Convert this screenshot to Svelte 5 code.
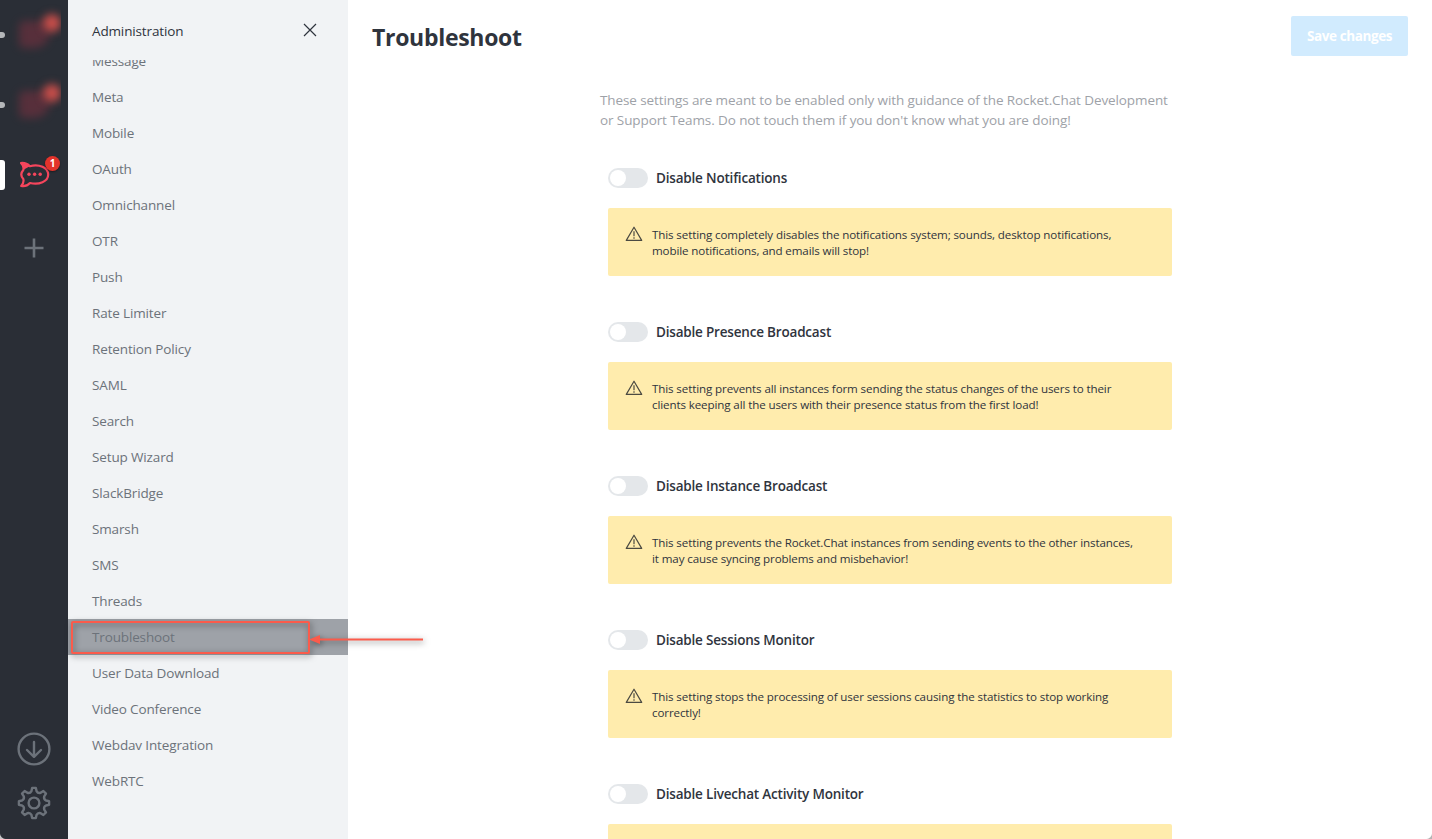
<script>
  const items = ['Message', 'Meta', 'Mobile', 'OAuth', 'Omnichannel', 'OTR', 'Push', 'Rate Limiter', 'Retention Policy', 'SAML', 'Search', 'Setup Wizard', 'SlackBridge', 'Smarsh', 'SMS', 'Threads', 'Troubleshoot', 'User Data Download', 'Video Conference', 'Webdav Integration', 'WebRTC'];
  const settings = [
    { label: 'Disable Notifications', lines: ['This setting completely disables the notifications system; sounds, desktop notifications,', 'mobile notifications, and emails will stop!'] },
    { label: 'Disable Presence Broadcast', lines: ['This setting prevents all instances form sending the status changes of the users to their', 'clients keeping all the users with their presence status from the first load!'] },
    { label: 'Disable Instance Broadcast', lines: ['This setting prevents the Rocket.Chat instances from sending events to the other instances,', 'it may cause syncing problems and misbehavior!'] },
    { label: 'Disable Sessions Monitor', lines: ['This setting stops the processing of user sessions causing the statistics to stop working', 'correctly!'] },
    { label: 'Disable Livechat Activity Monitor', lines: [] }
  ];
  // Cog outline: eight rounded teeth around a 17,17 centre.
  const cog = Array.from({ length: 8 }, (_, i) => {
    const p = (r, d) => {
      const a = ((i * 45 + d - 90) * Math.PI) / 180;
      return `${(17 + r * Math.cos(a)).toFixed(2)} ${(17 + r * Math.sin(a)).toFixed(2)}`;
    };
    return `${i ? 'L' : 'M'}${p(15.2, -7)} L${p(15.2, 7)} L${p(12.2, 12)} Q${p(10.2, 22.5)} ${p(12.2, 33)}`;
  }).join(' ') + ' Z';
</script>

<div class="app">
  <nav class="servers">
    <div class="server muted"><i class="pip"></i><span class="blob"></span><span class="glow"></span></div>
    <div class="server muted"><i class="pip"></i><span class="blob"></span><span class="glow"></span></div>
    <div class="server">
      <i class="pip active"></i>
      <svg class="rocket" width="30" height="28" viewBox="0 0 30 28" fill="none">
        <path d="M1 2C5 1.700 8 3.200 9.800 5.200C19 2.500 28.200 6.500 28.200 13.500C28.200 20.500 19 24.300 10 22C8 24.200 4.800 25.700 1.200 25C3.300 22.700 4 20.500 3.300 18C.8 15.200 .8 11.800 3.300 9C4 6.300 3 4 1 2Z" stroke="#f5455c" stroke-width="2.200" stroke-linejoin="round" />
        <path d="M1 2C5 1.700 8 3.200 9.800 5.200L3.500 8.800C4 6.300 3 4 1 2Z" fill="#f5455c" />
        <g fill="#f5455c"><circle cx="9" cy="13.300" r="1.700" /><circle cx="14.600" cy="13.300" r="1.700" /><circle cx="20.200" cy="13.300" r="1.700" /></g>
      </svg>
      <b class="badge">1</b>
    </div>
    <div class="add"><svg width="20" height="20" viewBox="0 0 20 20"><path d="M10 .5V19.500M.5 10H19.500" stroke="#6c727a" stroke-width="2.600" /></svg></div>
    <div class="tools">
      <svg width="34" height="34" viewBox="0 0 34 34" fill="none" stroke="#6c727a" stroke-width="2.400" stroke-linecap="round" stroke-linejoin="round"><circle cx="17" cy="17" r="15.400" /><path d="M17 10V24.500M10 18L17 24.800L24 18" /></svg>
      <svg width="34" height="34" viewBox="0 0 34 34" fill="none" stroke="#6c727a" stroke-width="2.400" stroke-linejoin="round"><path d={cog} /><circle cx="17" cy="17" r="5.400" /></svg>
    </div>
  </nav>

  <aside>
    <header>
      <span>Administration</span>
      <svg width="14" height="14" viewBox="0 0 14 14"><path d="M1 1L13 13M13 1L1 13" stroke="#2f343d" stroke-width="1.200" /></svg>
    </header>
    <div class="list">
      <ul>
        {#each items as item}
          <li class:selected={item === 'Troubleshoot'}>{item}</li>
        {/each}
      </ul>
    </div>
  </aside>

  <main>
    <div class="top">
      <h1>Troubleshoot</h1>
      <button>Save changes</button>
    </div>
    <div class="content">
      <p class="intro">These settings are meant to be enabled only with guidance of the Rocket.Chat Development<br />or Support Teams. Do not touch them if you don't know what you are doing!</p>
      {#each settings as s}
        <section>
          <div class="field"><span class="toggle"></span><span class="label">{s.label}</span></div>
          <div class="callout">
            <svg width="18" height="16" viewBox="0 0 18 16" fill="none" stroke="#4b4a42"><path d="M9 1.200L16.700 14.400H1.300Z" stroke-width="1.200" stroke-linejoin="round" /><path d="M9 5.300V10.200M9 11.300V12.700" stroke-width="1.200" /></svg>
            <div class="message">{#each s.lines as line}<div>{line}</div>{/each}</div>
          </div>
        </section>
      {/each}
    </div>
  </main>

  <svg class="annotation" width="370" height="60" viewBox="0 0 370 60" fill="none">
    <rect x="11" y="12" width="237" height="31" rx="1" stroke="#fb5b4b" stroke-width="2" />
    <path d="M257 29.500H362" stroke="#fb5b4b" stroke-width="2" />
    <path d="M248 29.500L259 25V34Z" fill="#fb5b4b" />
  </svg>
  <i class="corner left"></i>
  <i class="corner right"></i>
</div>

<style>
  :global(body) { margin: 0; overflow: hidden; background: #fff; }
  .app { position: relative; display: flex; width: 1432px; height: 839px; overflow: hidden; font-family: 'Open Sans', 'Noto Sans', sans-serif; font-size: 14px; color: #2f343d; }
  .servers { box-sizing: border-box; display: flex; flex-direction: column; width: 68px; height: 100%; background: #2a2e36; }
  .server { position: relative; display: flex; align-items: center; justify-content: center; height: 70px; }
  .pip { position: absolute; left: -2px; top: 32px; width: 7px; height: 6px; border-radius: 3px; background: #b4b6b9; }
  .pip.active { left: -3px; top: 20px; width: 8px; height: 30px; border-radius: 3px; background: #fff; }
  .muted { overflow: hidden; }
  .blob { position: absolute; left: 19px; top: 21px; width: 31px; height: 27px; border-radius: 5px 5px 16px 5px; background: #5c303c; filter: blur(4px); opacity: .9; }
  .glow { position: absolute; left: 43px; top: 14px; width: 18px; height: 18px; border-radius: 50%; background: #c94e4a; filter: blur(4px); clip-path: inset(-10px 0 -10px -10px); }
  .rocket { margin-left: 1px; }
  .badge { position: absolute; left: 45px; top: 16px; width: 15px; height: 15px; border-radius: 50%; background: #e3332b; color: #fff; font-size: 10px; line-height: 15px; text-align: center; box-shadow: 0 1px 2px #0006; }
  .add { display: flex; justify-content: center; padding-top: 28px; }
  .tools { display: flex; flex-direction: column; align-items: center; gap: 20px; margin-top: auto; padding-bottom: 19px; }
  aside { display: flex; flex-direction: column; width: 280px; height: 100%; background: #f1f3f5; }
  header { box-sizing: border-box; display: flex; align-items: center; justify-content: space-between; height: 60px; padding: 2px 31px 0 24px; font-size: 13.500px; letter-spacing: -.14px; }
  header svg { margin-bottom: 3px; }
  .list { flex: 1; overflow: hidden; }
  ul { list-style: none; margin: -17px 0 0; padding: 0; }
  li { height: 36px; padding-left: 24px; font-size: 13.500px; line-height: 36px; letter-spacing: -.14px; color: #6c727a; white-space: nowrap; }
  li.selected { background: #9ea2a8; }
  main { flex: 1; height: 100%; background: #fff; }
  .top { display: flex; align-items: center; justify-content: space-between; height: 40px; padding: 16px 24px; }
  h1 { margin: 2px 0 0; font-size: 23px; font-weight: 700; line-height: 32px; letter-spacing: -.3px; }
  button { width: 117px; height: 40px; padding: 0; border: 0; border-radius: 2px; background: #d1ebfe; color: #fff; font: 700 13.500px 'Open Sans', sans-serif; letter-spacing: -.4px; }
  .content { width: 580px; margin: 18px 0 0 252px; }
  .intro { margin: 0 0 38px; color: #9ea2a8; font-size: 13.500px; line-height: 20px; letter-spacing: -.1px; white-space: nowrap; }
  section { box-sizing: border-box; height: 154px; margin-left: 8px; }
  .field { display: flex; align-items: center; gap: 8px; height: 20px; margin-bottom: 20px; }
  .toggle { box-sizing: border-box; width: 40px; height: 20px; padding: 2px; border-radius: 10px; background: #e4e7ea; }
  .toggle::before { content: ''; display: block; width: 16px; height: 16px; border-radius: 50%; background: #fff; }
  .label { font-size: 13.500px; font-weight: 600; letter-spacing: -.19px; white-space: nowrap; }
  .callout { box-sizing: border-box; display: flex; gap: 9px; width: 564px; height: 68px; padding: 18px 17px; border-radius: 2px; background: #ffecad; }
  .callout svg { flex: none; }
  .message { padding-top: 1px; font-size: 11.600px; line-height: 16px; letter-spacing: -.12px; white-space: nowrap; }
  .annotation { position: absolute; left: 61px; top: 610px; filter: drop-shadow(1px 2px 3px #0008); }
  .corner { position: absolute; bottom: 0; width: 6px; height: 6px; }
  .left { left: 0; background: radial-gradient(circle at 100% 0, transparent 5.500px, #c4c5c6 6.500px); }
  .right { right: 0; background: radial-gradient(circle at 0 0, transparent 5.500px, #b4b4b4 6.500px); }
</style>
